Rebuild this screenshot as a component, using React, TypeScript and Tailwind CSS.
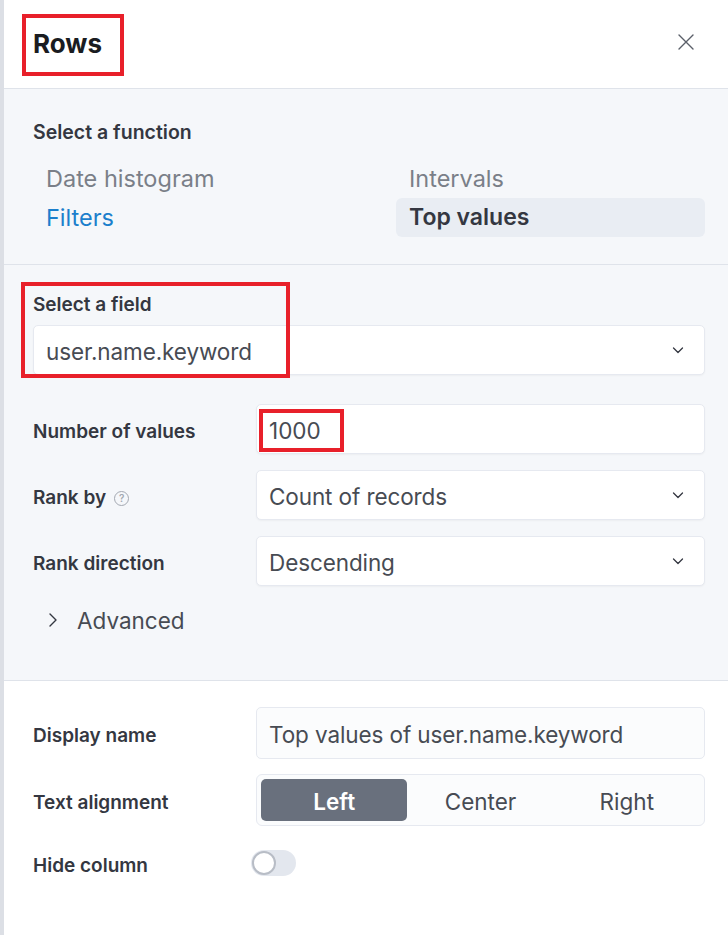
import React from "react";

const font = { fontFamily: "Inter, 'Noto Sans', sans-serif" };

function Chevron() {
  return (
    <svg width="16" height="16" viewBox="0 0 16 16" fill="none" stroke="#343741" strokeWidth="1.3" strokeLinecap="round" strokeLinejoin="round">
      <path d="M3.5 6l4.5 4.5L12.5 6" />
    </svg>
  );
}

function Select({ value }: { value: string }) {
  return (
    <div className="flex h-[50px] items-center justify-between rounded-[5px] border border-[#e6e9f0] bg-white pl-[12px] pr-[18px] shadow-[0_1px_2px_rgba(0,0,0,0.04)]">
      <span className="pt-[3px] text-[22.5px] tracking-[-0.1px] text-[#474b53]">{value}</span>
      <Chevron />
    </div>
  );
}

function Row({ label, children, extra }: { label: string; children: React.ReactNode; extra?: React.ReactNode }) {
  return (
    <div className="flex items-center">
      <div className="flex w-[223px] shrink-0 items-center gap-[8px] pt-[6px] text-[19px] font-semibold text-[#343741]">
        {label}
        {extra}
      </div>
      <div className="flex-1">{children}</div>
    </div>
  );
}

export default function App() {
  return (
    <div className="flex h-[935px] w-[728px] bg-white" style={font}>
      <div className="w-[4px] shrink-0 bg-[#dcdfe5]" />
      <div className="flex flex-1 flex-col">
        {/* header */}
        <div className="relative flex h-[89px] shrink-0 items-center justify-between border-b border-[#dfe3ea] pl-[29px] pr-[33px]">
          <span className="mt-[-2px] text-[26px] font-bold text-[#1a1c21]">Rows</span>
          <div className="pointer-events-none absolute left-[18px] top-[14px] h-[62px] w-[102px] border-[4px] border-[#e8202a]" />
          <svg width="18" height="18" viewBox="0 0 18 18" className="mt-[-4px]" stroke="#5a5f69" strokeWidth="1.4" strokeLinecap="round">
            <path d="M2 2l14 14M16 2L2 16" />
          </svg>
        </div>
        {/* function section */}
        <div className="flex flex-col border-b border-[#dfe3ea] bg-[#f5f7fa] pb-[27px] pl-[29px] pr-[23px] pt-[31px]">
          <div className="h-[24px] text-[19.5px] leading-[24px] font-semibold text-[#343741]">Select a function</div>
          <div className="mt-[15px] grid grid-cols-[363px_1fr]">
            <div className="flex h-[39px] items-center pl-[13px] text-[23.5px] text-[#7a7f88]">Date histogram</div>
            <div className="flex h-[39px] items-center pl-[13px] text-[23.5px] text-[#7a7f88]">Intervals</div>
            <div className="flex h-[39px] items-center pl-[13px] text-[23.5px] text-[#1b7fcc]">Filters</div>
            <div className="flex h-[39px] items-center rounded-[6px] bg-[#e9edf3] pl-[13px] text-[23px] font-semibold text-[#343741]">Top values</div>
          </div>
        </div>
        {/* field section */}
        <div className="relative flex flex-col border-b border-[#dfe3ea] bg-[#f5f7fa] pb-[45px] pl-[29px] pr-[23px] pt-[28px]">
          <div className="h-[24px] text-[19px] leading-[24px] font-semibold text-[#343741]">Select a field</div>
          <div className="mt-[8px]">
            <Select value="user.name.keyword" />
          </div>
          <div className="pointer-events-none absolute left-[17px] top-[17px] h-[96px] w-[269px] border-[4px] border-[#e8202a]" />
          <div className="mt-[29px] flex flex-col gap-[16px]">
            <Row label="Number of values">
              <div className="relative flex h-[50px] items-center rounded-[5px] border border-[#e6e9f0] bg-white pl-[12px] shadow-[0_1px_2px_rgba(0,0,0,0.04)]">
                <span className="pt-[3px] text-[22.5px] text-[#474b53]">1000</span>
                <div className="pointer-events-none absolute left-[2px] top-[4px] h-[43px] w-[85px] border-[4px] border-[#e8202a]" />
              </div>
            </Row>
            <Row
              label="Rank by"
              extra={
                <span className="flex h-[15px] w-[15px] items-center justify-center rounded-full border border-[#a3a8b1] text-[10px] leading-none text-[#a3a8b1]">?</span>
              }
            >
              <Select value="Count of records" />
            </Row>
            <Row label="Rank direction">
              <Select value="Descending" />
            </Row>
          </div>
          <div className="mt-[19px] flex h-[30px] items-center gap-[17px] pl-[13px]">
            <svg width="14" height="16" viewBox="0 0 14 16" fill="none" stroke="#343741" strokeWidth="1.4" strokeLinecap="round" strokeLinejoin="round">
              <path d="M4 2l6 6-6 6" />
            </svg>
            <span className="pt-[2px] text-[22.5px] text-[#474b53]">Advanced</span>
          </div>
        </div>
        {/* bottom section */}
        <div className="flex flex-col gap-[15px] bg-white pl-[29px] pr-[23px] pt-[26px]">
          <Row label="Display name">
            <div className="flex h-[52px] items-center rounded-[5px] border border-[#e6e9f0] bg-[#fbfcfd] pl-[12px]">
              <span className="pt-[3px] text-[22.5px] tracking-[-0.1px] text-[#474b53]">Top values of user.name.keyword</span>
            </div>
          </Row>
          <Row label="Text alignment">
            <div className="grid h-[52px] grid-cols-3 rounded-[6px] border border-[#e6e9f0] bg-[#fbfcfd] p-[4px]">
              <div className="flex items-center justify-center rounded-[5px] bg-[#69707d] pt-[3px] text-[22.5px] font-semibold text-white">Left</div>
              <div className="flex items-center justify-center pt-[3px] text-[22.5px] text-[#474b53]">Center</div>
              <div className="flex items-center justify-center pt-[3px] text-[22.5px] text-[#474b53]">Right</div>
            </div>
          </Row>
          <div className="flex h-[44px] items-center">
            <div className="w-[218px] shrink-0 pt-[6px] text-[19px] font-semibold text-[#343741]">Hide column</div>
            <div className="flex h-[26px] w-[45px] items-center rounded-full bg-[#e3e7ee] pl-[1px]">
              <div className="h-[24px] w-[24px] rounded-full border-[2px] border-[#b8bdc6] bg-white" />
            </div>
          </div>
        </div>
        <div className="flex-1 bg-white" />
      </div>
    </div>
  );
}
